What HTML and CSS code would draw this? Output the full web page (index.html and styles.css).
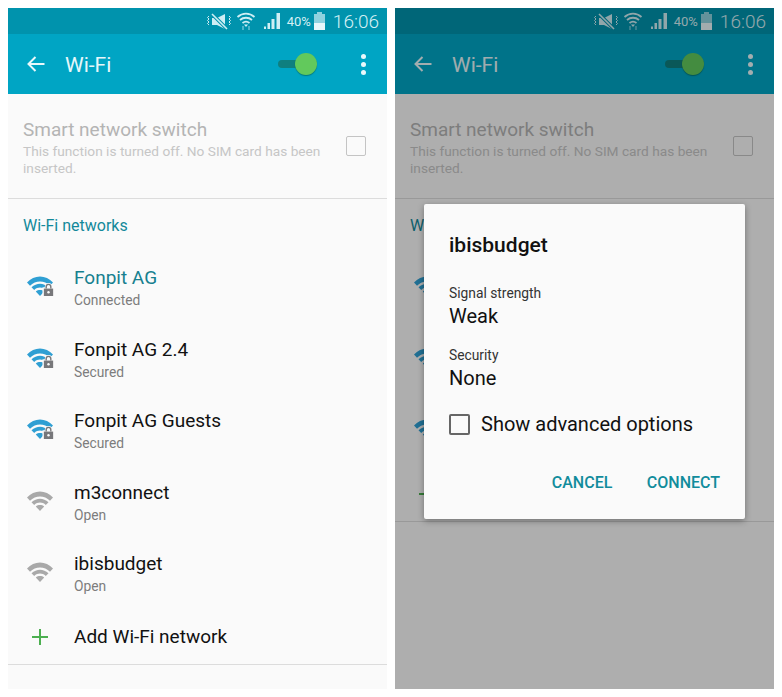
FILE: index.html
```html
<!DOCTYPE html>
<html lang="en">
<head>
    <meta charset="UTF-8">
    <meta name="viewport" content="width=device-width, initial-scale=1.0">
    <title>Wi-Fi</title>
    <link rel="stylesheet" href="styles.css">
</head>
<body>
    <svg class="defs" width="0" height="0">
        <symbol id="wifi" viewBox="0 0 26 20">
            <path d="M0 6.500C7-1.500 19-1.500 26 6.500L23 9.700C17.500 4 8.500 4 3 9.700Z"/>
            <path d="M4.500 11.200C9.500 6.500 16.500 6.500 21.500 11.200L18.800 14C15.300 10.800 10.700 10.800 7.200 14Z"/>
            <path d="M8.800 15.400C11.300 13.500 14.700 13.500 17.200 15.400L13 20Z"/>
        </symbol>
        <symbol id="lock" viewBox="0 0 14 16">
            <path d="M4.500 7V5a2.500 2.500 0 0 1 5 0v2M2 7h10v8H2z" fill="#fafafa" stroke="#fafafa" stroke-width="3"/>
            <path d="M4.500 7V5a2.500 2.500 0 0 1 5 0v2" fill="none" stroke="#77777a" stroke-width="1.500"/>
            <path d="M2 7h10v8H2z" fill="#77777a"/>
            <circle cx="7" cy="11" r="1.300" fill="#fafafa"/>
        </symbol>
        <symbol id="statusicons" viewBox="0 0 84 22">
            <!-- vibrate muted -->
            <path d="M13 8h5l8-4v15l-8-4h-5z" fill="#cfeef4"/>
            <path d="M13 4l15 15" stroke="#0093ad" stroke-width="3.500" fill="none"/>
            <path d="M13 4l15 15" stroke="#cfeef4" stroke-width="1.600" fill="none"/>
            <path d="M10 6l-1.500 1.500 1.500 1.500-1.500 1.500 1.500 1.500-1.500 1.500 1.500 1.500M30 6l1.500 1.500-1.500 1.500 1.500 1.500-1.500 1.500 1.500 1.500-1.500 1.500" stroke="#cfeef4" stroke-width="1" fill="none"/>
            <!-- wifi -->
            <path d="M38.500 7c5-4.500 12-4.500 17 0M41 10c3.500-3 8.500-3 12 0M43.500 13c2-1.500 5-1.500 7 0" stroke="#cfeef4" stroke-width="1.800" fill="none"/>
            <path d="M45 14.500l2 2.500 2-2.500z" fill="#cfeef4"/>
            <path d="M44 16v4M50 16v4" stroke="#7fcfdf" stroke-width="1.200" fill="none"/>
            <!-- signal -->
            <path d="M65 19h2v-2.500h-2zM68.500 19h2.500v-6h-2.500zM72.500 19h3v-10h-3zM77.500 19h3.500V3h-3.500z" fill="#cfeef4"/>
        </symbol>
    </svg>

    <div class="phones">
        <section class="phone">
            <div class="status">
                <svg class="status-icons"><use href="#statusicons"/></svg>
                <span class="pct">40%</span>
                <span class="battery"><i></i></span>
                <span class="clock">16:06</span>
            </div>
            <header class="appbar">
                <svg class="back" viewBox="0 0 20 18"><path d="M18.500 9H2.500M9.500 2L2.500 9l7 7" fill="none" stroke="#eaf8fb" stroke-width="2"/></svg>
                <span class="appbar-title">Wi-Fi</span>
                <span class="toggle"><i></i></span>
                <span class="more"><i></i><i></i><i></i></span>
            </header>
            <div class="smart">
                <div class="smart-text">
                    <div class="smart-title">Smart network switch</div>
                    <div class="smart-sub">This function is turned off. No SIM card has been inserted.</div>
                </div>
                <span class="checkbox-off"></span>
            </div>
            <div class="section-title">Wi-Fi networks</div>
            <ul class="networks">
                <li class="net"><span class="net-icon blue"><svg class="wifi"><use href="#wifi"/></svg><svg class="lock"><use href="#lock"/></svg></span><div><div class="net-name active">Fonpit AG</div><div class="net-sub">Connected</div></div></li>
                <li class="net"><span class="net-icon blue"><svg class="wifi"><use href="#wifi"/></svg><svg class="lock"><use href="#lock"/></svg></span><div><div class="net-name">Fonpit AG 2.4</div><div class="net-sub">Secured</div></div></li>
                <li class="net"><span class="net-icon blue"><svg class="wifi"><use href="#wifi"/></svg><svg class="lock"><use href="#lock"/></svg></span><div><div class="net-name">Fonpit AG Guests</div><div class="net-sub">Secured</div></div></li>
                <li class="net"><span class="net-icon grey"><svg class="wifi"><use href="#wifi"/></svg></span><div><div class="net-name">m3connect</div><div class="net-sub">Open</div></div></li>
                <li class="net"><span class="net-icon grey"><svg class="wifi"><use href="#wifi"/></svg></span><div><div class="net-name">ibisbudget</div><div class="net-sub">Open</div></div></li>
                <li class="net add"><span class="net-icon"><span class="plus"></span></span><div class="net-name">Add Wi-Fi network</div></li>
            </ul>
        </section>

        <section class="phone">
            <div class="status">
                <svg class="status-icons"><use href="#statusicons"/></svg>
                <span class="pct">40%</span>
                <span class="battery"><i></i></span>
                <span class="clock">16:06</span>
            </div>
            <header class="appbar">
                <svg class="back" viewBox="0 0 20 18"><path d="M18.500 9H2.500M9.500 2L2.500 9l7 7" fill="none" stroke="#eaf8fb" stroke-width="2"/></svg>
                <span class="appbar-title">Wi-Fi</span>
                <span class="toggle"><i></i></span>
                <span class="more"><i></i><i></i><i></i></span>
            </header>
            <div class="smart">
                <div class="smart-text">
                    <div class="smart-title">Smart network switch</div>
                    <div class="smart-sub">This function is turned off. No SIM card has been inserted.</div>
                </div>
                <span class="checkbox-off"></span>
            </div>
            <div class="section-title">Wi-Fi networks</div>
            <ul class="networks">
                <li class="net"><span class="net-icon blue"><svg class="wifi"><use href="#wifi"/></svg></span></li>
                <li class="net"><span class="net-icon blue"><svg class="wifi"><use href="#wifi"/></svg></span></li>
                <li class="net"><span class="net-icon blue"><svg class="wifi"><use href="#wifi"/></svg></span></li>
                <li class="net add"><span class="net-icon"><span class="plus"></span></span></li>
            </ul>
            <div class="scrim"></div>
            <div class="dialog">
                <h2 class="dialog-title">ibisbudget</h2>
                <div class="field-label">Signal strength</div>
                <div class="field-value">Weak</div>
                <div class="field-label second">Security</div>
                <div class="field-value">None</div>
                <div class="advanced"><span class="checkbox"></span>Show advanced options</div>
                <div class="actions"><span>CANCEL</span><span>CONNECT</span></div>
            </div>
        </section>
    </div>
</body>
</html>
```

FILE: styles.css
```css
body {
    margin: 0;
    background: white;
    font-family: Roboto, "Liberation Sans", sans-serif;
}

ul {
    list-style: none;
    margin: 0;
    padding: 0;
}

.defs {
    display: block;
    height: 0;
}

.phones {
    display: flex;
    gap: 8px;
    padding: 8px;
}

.phone {
    position: relative;
    width: 379px;
    height: 681px;
    background: #fafafa;
    overflow: hidden;
}

.status {
    display: flex;
    align-items: center;
    height: 26px;
    padding-right: 8px;
    background: #0093ad;
    color: #d5f0f5;
    justify-content: flex-end;
}

.status-icons {
    width: 84px;
    height: 22px;
    margin-right: 4px;
}

.pct {
    font-size: 13px;
    margin-right: 3px;
}

.battery {
    position: relative;
    display: flex;
    align-items: flex-end;
    width: 11px;
    height: 16px;
    margin: 1px 8px 0 0;
    background: #8fd2df;
}

.battery::before {
    content: "";
    position: absolute;
    left: 3px;
    top: -2px;
    width: 5px;
    height: 2px;
    background: #8fd2df;
}

.battery i {
    display: block;
    width: 100%;
    height: 7px;
    background: #e8f7fa;
}

.clock {
    font-size: 19px;
    font-weight: 300;
}

.appbar {
    display: flex;
    align-items: center;
    height: 60px;
    background: #00a5c4;
    padding: 0 21px 0 18px;
}

.back {
    width: 20px;
    height: 18px;
    margin-right: 19px;
}

.appbar-title {
    flex: 1;
    padding-top: 1px;
    font-size: 21px;
    color: #e6f7fa;
}

.toggle {
    display: flex;
    align-items: center;
    justify-content: flex-end;
    width: 39px;
    height: 8px;
    margin-right: 44px;
    border-radius: 4px;
    background: #0f7f7f;
}

.toggle i {
    display: block;
    flex: none;
    width: 22px;
    height: 22px;
    border-radius: 50%;
    background: #62c95c;
    box-shadow: 0 1px 1px rgba(0, 80, 60, 0.5);
}

.more {
    display: flex;
    flex-direction: column;
    gap: 3px;
}

.more i {
    display: block;
    width: 5px;
    height: 5px;
    border-radius: 50%;
    background: #eaf8fb;
}

.smart {
    display: flex;
    align-items: center;
    height: 102px;
    padding: 2px 21px 0 15px;
    border-bottom: 1px solid #dcdcdc;
}

.smart-text {
    flex: 1;
    padding-right: 10px;
}

.smart-title {
    font-size: 19px;
    line-height: 24px;
    color: #b4b4b4;
    margin-bottom: 1px;
}

.smart-sub {
    font-size: 13.7px;
    line-height: 17px;
    color: #c6c6c6;
}

.checkbox-off {
    width: 18px;
    height: 18px;
    margin-bottom: 2px;
    border: 1.5px solid #c4c4c4;
    border-radius: 2px;
}

.section-title {
    height: 53.5px;
    line-height: 53px;
    padding-left: 15px;
    font-size: 16px;
    color: #13899a;
}

.net {
    display: flex;
    align-items: center;
    height: 71.5px;
    padding-left: 15px;
}

.net.add {
    height: 53.5px;
    border-bottom: 1px solid #dcdcdc;
}

.net-icon {
    position: relative;
    display: flex;
    justify-content: center;
    align-items: center;
    flex: none;
    width: 34px;
    height: 28px;
    margin-right: 17px;
}

.blue {
    fill: #2f9fd3;
}

.grey {
    fill: #a9a9a9;
}

.wifi {
    width: 26px;
    height: 20px;
    margin-bottom: 4px;
}

.lock {
    position: absolute;
    right: 2px;
    bottom: 5px;
    width: 13px;
    height: 15px;
}

.plus {
    position: relative;
    width: 16px;
    height: 16px;
    background:
        linear-gradient(#4caf50, #4caf50) center / 100% 2px no-repeat,
        linear-gradient(#4caf50, #4caf50) center / 2px 100% no-repeat;
}

.net-name {
    font-size: 19px;
    color: #111;
    line-height: 24px;
}

.net-name.active {
    color: #16808f;
}

.net-sub {
    font-size: 13.8px;
    line-height: 20px;
    color: #7d7d7d;
}

.scrim {
    position: absolute;
    inset: 0;
    background: rgba(0, 0, 0, 0.3);
}

.dialog {
    position: absolute;
    left: 29px;
    top: 196px;
    width: 321px;
    height: 315px;
    box-sizing: border-box;
    padding: 26px 25px 0;
    background: #fafafa;
    border-radius: 2px;
    box-shadow: 0 2px 6px rgba(0, 0, 0, 0.35);
}

.dialog-title {
    margin: 0 0 24px;
    font-size: 21px;
    line-height: 30px;
    font-weight: 500;
    color: #111;
}

.field-label {
    font-size: 13.8px;
    line-height: 18px;
    color: #333;
}

.field-label.second {
    margin-top: 15px;
}

.field-value {
    font-size: 20px;
    line-height: 29px;
    color: #111;
}

.advanced {
    display: flex;
    align-items: center;
    margin-top: 17px;
    font-size: 20px;
    line-height: 28px;
    color: #111;
}

.checkbox {
    width: 17px;
    height: 17px;
    margin-right: 11px;
    border: 2px solid #666;
    border-radius: 2px;
}

.actions {
    display: flex;
    justify-content: flex-end;
    gap: 34.5px;
    margin-top: 35px;
    font-size: 16px;
    font-weight: 500;
    color: #118c9c;
}
```
